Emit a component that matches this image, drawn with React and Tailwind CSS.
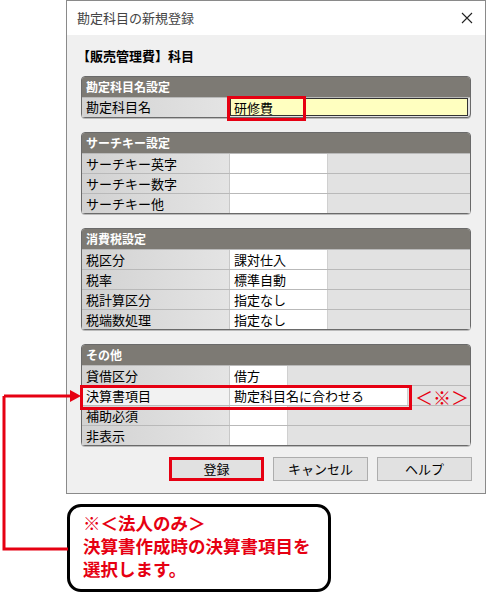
import React from "react";

const F = { fontFamily: '"Noto Sans CJK JP", "Noto Sans", sans-serif' };

function Header({ children }) {
  return (
    <div className="h-[20px] bg-[#7d7a74] text-white font-bold text-[12px] leading-[20px] pl-[4px] rounded-t-[3px]">
      {children}
    </div>
  );
}

function Row({ label, value, wide, highlight, valueW = "w-[98px]" }) {
  return (
    <div className="h-[20px] flex border-t border-[#b9b9b9] text-[13px] leading-[19px] text-black">
      <div className={`w-[148px] pl-[4px] border-r border-[#c8c8c8] ${highlight ? "bg-[#f2f2f2]" : "bg-gradient-to-r from-[#d2d2d2] to-[#e4e4e4]"}`}>
        {label}
      </div>
      <div className={`${wide ? "w-[178px]" : valueW} bg-white pl-[4px] border-r border-[#d0d0d0]`}>{value}</div>
      <div className="flex-1 bg-[#e2e2e2]" />
    </div>
  );
}

function Section({ title, children }) {
  return (
    <div className="border border-[#6a6a6a] rounded-[4px] bg-[#e2e2e2] shadow-[0_1px_0_#bbb]">
      <Header>{title}</Header>
      {children}
    </div>
  );
}

function Btn({ children, red }) {
  return (
    <div
      className={`h-[24px] w-[95px] flex items-center justify-center text-[13px] bg-[#e1e1e1] ${
        red ? "border-[3px] border-[#e60012]" : "border border-[#adadad]"
      }`}
    >
      {children}
    </div>
  );
}

export default function App() {
  return (
    <div className="relative w-[488px] h-[595px] bg-white overflow-hidden" style={F}>
      {/* dialog */}
      <div className="ml-[66px] w-[420px] border border-[#8a8a8a] bg-[#f0f0f0]">
        <div className="h-[34px] bg-white flex items-center justify-between pl-[10px] pr-[12px]">
          <span className="text-[13px] text-[#444]">勘定科目の新規登録</span>
          <svg width="12" height="12" viewBox="0 0 12 12">
            <path d="M1 1L11 11M11 1L1 11" stroke="#222" strokeWidth="1.1" />
          </svg>
        </div>
        <div className="px-[14px] pb-[12px]">
          <div className="h-[41px] flex items-center text-[13px] font-bold text-black -ml-[4px]">
            【販売管理費】科目
          </div>
          <div className="flex flex-col gap-[14px]">
            <div className="relative">
              <Section title="勘定科目名設定">
                <div className="h-[20px] flex border-t border-[#b9b9b9] text-[13px] leading-[18px]">
                  <div className="w-[148px] pl-[4px] bg-gradient-to-r from-[#d2d2d2] to-[#e4e4e4]">勘定科目名</div>
                  <div className="flex-1 mr-[2px] mb-[1px] bg-[#ffffc0] border border-[#333] pl-[3px]">研修費</div>
                </div>
              </Section>
              <div className="absolute left-[146px] top-[20px] w-[79px] h-[25px] border-[3px] border-[#e60012]" />
            </div>
            <Section title="サーチキー設定">
              <Row label="サーチキー英字" value="" />
              <Row label="サーチキー数字" value="" />
              <Row label="サーチキー他" value="" />
            </Section>
            <Section title="消費税設定">
              <Row label="税区分" value="課対仕入" />
              <Row label="税率" value="標準自動" />
              <Row label="税計算区分" value="指定なし" />
              <Row label="税端数処理" value="指定なし" />
            </Section>
            <div className="relative">
              <Section title="その他">
                <Row label="貸借区分" value="借方" valueW="w-[58px]" />
                <Row label="決算書項目" value="勘定科目名に合わせる" wide highlight />
                <Row label="補助必須" value="" valueW="w-[58px]" />
                <Row label="非表示" value="" valueW="w-[58px]" />
              </Section>
              <div className="absolute left-[-1px] top-[41px] w-[332px] h-[25px] border-[3px] border-[#e60012]" />
              <div className="absolute left-[334px] top-[41px] text-[18px] leading-[24px] text-[#e60012]">＜※＞</div>
            </div>
          </div>
          <div className="flex justify-end gap-[9px] mt-[11px] -mr-[1px]">
            <Btn red>登録</Btn>
            <Btn>キャンセル</Btn>
            <Btn>ヘルプ</Btn>
          </div>
        </div>
      </div>

      {/* callout */}
      <div className="ml-[67px] mt-[10px] w-[264px] h-[88px] border-[3px] border-black rounded-[14px] bg-white pl-[13px] pt-[4px] text-[#e60012] font-bold text-[17.5px] leading-[23px]">
        <div>※＜法人のみ＞</div>
        <div>決算書作成時の決算書項目を</div>
        <div>選択します。</div>
      </div>

      {/* arrow */}
      <svg className="absolute left-0 top-0 pointer-events-none" width="488" height="595">
        <path d="M4 396 L72 396 M4 396 L4 549 L68 549" stroke="#e60012" strokeWidth="3" fill="none" />
        <path d="M70 390 L81 396 L70 402 Z" fill="#e60012" />
      </svg>
    </div>
  );
}
